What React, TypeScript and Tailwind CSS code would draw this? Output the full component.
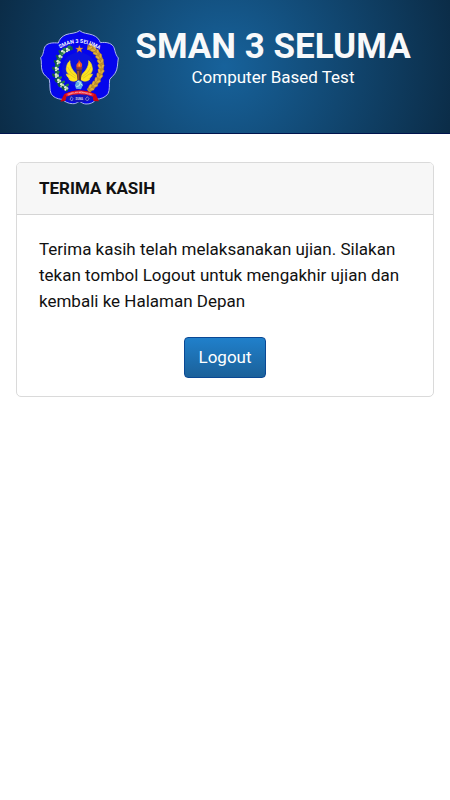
const wheat = [
  [167, 64, 20], [177, 71, 38], [186, 81, 52], [194, 93, 66], [199, 107, 80],
  [201, 122, 92], [201, 137, 104], [197, 151, 116], [191, 165, 130], [183, 177, 142], [173, 187, 152],
];

const cotton = [
  [101, 75], [87, 82], [79, 96], [73, 112], [68, 132], [68, 152], [75, 168], [84, 181], [96, 190],
];

function SchoolLogo() {
  return (
    <svg viewBox="15 12 246 228" className="h-[76px] w-[82px] shrink-0" role="img" aria-label="Logo SMAN 3 Seluma">
      <path
        d="M137 17 C147 26 162 25 176 30 C189 35 196 43 199 53 C215 51 230 53 238 64 C244 74 242 86 253 99 C250 116 252 132 243 145 C238 153 231 157 227 164 C225 180 228 195 222 206 C215 217 200 222 187 223 C180 232 168 238 156 237 C149 237 143 233 136 229 C129 234 122 237 115 236 C103 236 91 229 84 223 C70 222 56 216 51 205 C46 194 49 179 46 164 C40 156 29 151 25 139 C20 125 24 111 20 98 C31 87 27 71 35 62 C44 53 58 53 73 54 C76 42 84 34 96 29 C109 24 126 26 137 17 Z"
        fill="#0505ed" stroke="#aeb6ee" strokeWidth="3" strokeLinejoin="round"
      />
      <circle cx="135" cy="133" r="51" fill="#0b12df" />
      <path d="M116 69 C91 73 72 94 68 122 C64 151 76 178 101 196" fill="none" stroke="#176447" strokeWidth="10" />
      {cotton.map(([x, y], i) => (
        <g key={i} transform={`translate(${x} ${y})`}>
          <ellipse cx="8" cy="-5" rx="7" ry="4" fill="#297d4b" transform="rotate(-38)" />
          <ellipse cx="-6" cy="6" rx="7" ry="4" fill="#155a43" transform="rotate(50)" />
          <circle cx="-2" cy="-3" r="4" fill="#e3edda" />
          <circle cx="3" cy="0" r="4" fill="#c1d9b8" />
          <circle cx="-2" cy="4" r="3" fill="#f1f4ec" />
        </g>
      ))}
      <path d="M160 67 C192 72 208 105 201 139 C196 164 180 187 162 198" fill="none" stroke="#c6952a" strokeWidth="14" />
      {wheat.map(([x, y, angle], i) => (
        <g key={i} transform={`translate(${x} ${y}) rotate(${angle})`} fill="#e2b03a" stroke="#8f6a27" strokeWidth="1">
          <ellipse cx="0" cy="-5" rx="8" ry="4" transform="rotate(32)" />
          <ellipse cx="0" cy="5" rx="8" ry="4" transform="rotate(-32)" />
        </g>
      ))}
      <path id="logo-arc" d="M76 72 Q136 34 198 75" fill="none" />
      <text fill="#f2f4ff" fontSize="16" fontWeight="700" fontFamily="Roboto, sans-serif" textAnchor="middle">
        <textPath href="#logo-arc" startOffset="50%">SMAN 3 SELUMA</textPath>
      </text>
      <path d="M136 61 L139 69 L147 69 L141 74 L143 82 L136 77 L129 82 L131 74 L125 69 L133 69 Z" fill="#e59a35" stroke="#b36730" />
      <path d="M131 164 C121 172 108 168 104 161 L113 162 C102 160 98 153 97 147 L107 150 C98 144 95 134 98 125 C99 118 102 112 108 107 C107 121 114 134 124 144 C129 149 131 155 131 164 Z" fill="#ffe41c" stroke="#ffe41c" strokeWidth="2" />
      <path d="M141 164 C151 172 164 168 168 161 L159 162 C170 160 174 153 175 147 L165 150 C174 144 177 134 174 125 C173 118 170 112 164 107 C165 121 158 134 148 144 C143 149 141 155 141 164 Z" fill="#ffe41c" stroke="#ffe41c" strokeWidth="2" />
      <path d="M101 126 Q109 146 127 155 M171 126 Q163 146 145 155 M103 145 L125 160 M169 145 L147 160" fill="none" stroke="#d0bd28" strokeWidth="2" />
      <path d="M134 103 C138 112 147 114 144 124 Q142 131 136 131 Q127 130 127 122 C127 114 137 113 134 103 Z" fill="#ed5423" />
      <path d="M135 113 Q141 121 136 125 Q131 124 135 113 Z" fill="#ffaf35" />
      <path d="M125 127 H146 L143 134 H128 Z" fill="#8c3c37" />
      <path d="M127 135 H144 L140 167 H131 Z" fill="#563332" />
      <path d="M130 138 H134 V164 H132 Z" fill="#b95b37" />
      <path d="M126 172 L133 165 L142 169 L147 180 L141 193 L126 191 L123 181 Z" fill="#5faddf" />
      <path d="M130 169 L139 172 L136 182 L127 185 M139 176 L145 181" fill="none" stroke="#cce9f7" strokeWidth="3" />
      <path d="M91 207 Q135 184 185 207 L195 229 L179 228 L174 214 Q135 200 100 214 L94 227 L79 230 Z" fill="#ca0614" />
      <path d="M94 207 Q135 188 181 207 L176 217 Q135 202 99 217 Z" fill="#ee1725" />
      <path d="M96 215 Q136 201 178 215 L173 228 Q136 235 101 228 Z" fill="#1415bd" />
      <path id="logo-ribbon" d="M103 211 Q136 198 171 211" fill="none" />
      <text fill="#ffd7d7" fontSize="7" fontWeight="700" fontFamily="Roboto, sans-serif" textAnchor="middle">
        <textPath href="#logo-ribbon" startOffset="50%">SEKOLAH MENENGAH</textPath>
      </text>
      <g fill="none" stroke="#aab0db" strokeWidth="2">
        <path d="M112 215 L117 221 L114 228 L108 223 Z M160 215 L165 221 L160 228 L154 222 Z" />
      </g>
      <text x="136" y="226" fill="#d6d8e5" fontSize="8" fontWeight="700" fontFamily="Roboto, sans-serif" textAnchor="middle">SUMA</text>
    </svg>
  );
}

export default function App() {
  return (
    <div className="min-h-screen bg-white font-[Roboto,sans-serif] text-[17px] leading-[26px] text-[#111]">
      <header className="flex items-center justify-center gap-[14px] border-b border-[#00144d] bg-[radial-gradient(circle_at_center,#17629b_0%,#0b2c47_100%)] pt-[29px] pb-7 text-white">
        <SchoolLogo />
        <div className="self-start text-center">
          <h1 className="text-[35px] leading-9 font-bold text-[#f8f9fa]">SMAN 3 SELUMA</h1>
          <p className="leading-6">Computer Based Test</p>
        </div>
      </header>
      <main className="px-4 pt-7">
        <section className="overflow-hidden rounded-[5px] border border-[#dadada]">
          <h2 className="border-b border-[#d5d5d5] bg-[#f7f7f7] px-[22px] pt-3 pb-[13px] font-bold">TERIMA KASIH</h2>
          <div className="px-[22px] pt-[21px] pb-[18px]">
            <p>Terima kasih telah melaksanakan ujian. Silakan tekan tombol Logout untuk mengakhir ujian dan kembali ke Halaman Depan</p>
            <div className="mt-[23px] flex justify-center">
              <button type="button" className="rounded border border-[#0a4894] bg-linear-to-b from-[#2080cb] to-[#1b619a] px-[13px] pt-[6px] pb-[7px] text-white">Logout</button>
            </div>
          </div>
        </section>
      </main>
    </div>
  );
}
